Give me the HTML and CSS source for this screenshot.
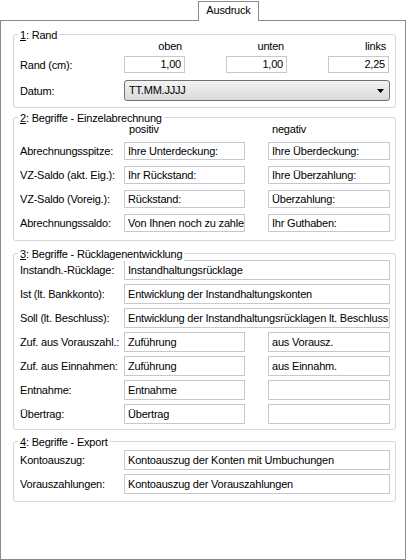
FILE: index.html
```html
<!DOCTYPE html>
<html lang="de">
<head>
<meta charset="utf-8">
<title>Ausdruck</title>
<link rel="stylesheet" href="styles.css">
</head>
<body>
<div class="tabbar"><div class="tab">Ausdruck</div></div>
<div class="panel">
  <section class="group g1">
    <div class="legend"><u>1</u>: Rand</div>
    <div class="hdr3"><span>oben</span><span>unten</span><span>links</span></div>
    <div class="row r-num"><span class="lbl">Rand (cm):</span><div class="fld num">1,00</div><div class="fld num">1,00</div><div class="fld num">2,25</div></div>
    <div class="row r-dd"><span class="lbl">Datum:</span><div class="combo"><span>TT.MM.JJJJ</span><svg class="arrow" width="7" height="4" viewBox="0 0 7 4"><polygon points="0,0 7,0 3.5,4" fill="#000"/></svg></div></div>
  </section>

  <section class="group g2">
    <div class="legend"><u>2</u>: Begriffe - Einzelabrechnung</div>
    <div class="hdr2"><span class="h-pos">positiv</span><span class="h-neg">negativ</span></div>
    <div class="rows rows2">
      <div class="row"><span class="lbl">Abrechnungsspitze:</span><div class="fld c1">Ihre Unterdeckung:</div><div class="fld c2">Ihre Überdeckung:</div></div>
      <div class="row"><span class="lbl">VZ-Saldo (akt. Eig.):</span><div class="fld c1">Ihr Rückstand:</div><div class="fld c2">Ihre Überzahlung:</div></div>
      <div class="row"><span class="lbl">VZ-Saldo (Voreig.):</span><div class="fld c1">Rückstand:</div><div class="fld c2">Überzahlung:</div></div>
      <div class="row"><span class="lbl">Abrechnungssaldo:</span><div class="fld c1">Von Ihnen noch zu zahlen:</div><div class="fld c2">Ihr Guthaben:</div></div>
    </div>
  </section>

  <section class="group g3">
    <div class="legend"><u>3</u>: Begriffe - Rücklagenentwicklung</div>
    <div class="rows rows3">
      <div class="row"><span class="lbl">Instandh.-Rücklage:</span><div class="fld wide">Instandhaltungsrücklage</div></div>
      <div class="row"><span class="lbl">Ist (lt. Bankkonto):</span><div class="fld wide">Entwicklung der Instandhaltungskonten</div></div>
      <div class="row"><span class="lbl">Soll (lt. Beschluss):</span><div class="fld wide">Entwicklung der Instandhaltungsrücklagen lt. Beschluss</div></div>
      <div class="row"><span class="lbl">Zuf. aus Vorauszahl.:</span><div class="fld c1">Zuführung</div><div class="fld c2">aus Vorausz.</div></div>
      <div class="row"><span class="lbl">Zuf. aus Einnahmen:</span><div class="fld c1">Zuführung</div><div class="fld c2">aus Einnahm.</div></div>
      <div class="row"><span class="lbl">Entnahme:</span><div class="fld c1">Entnahme</div><div class="fld c2"></div></div>
      <div class="row"><span class="lbl">Übertrag:</span><div class="fld c1">Übertrag</div><div class="fld c2"></div></div>
    </div>
  </section>

  <section class="group g4">
    <div class="legend"><u>4</u>: Begriffe - Export</div>
    <div class="rows rows3">
      <div class="row"><span class="lbl">Kontoauszug:</span><div class="fld wide">Kontoauszug der Konten mit Umbuchungen</div></div>
      <div class="row"><span class="lbl">Vorauszahlungen:</span><div class="fld wide">Kontoauszug der Vorauszahlungen</div></div>
    </div>
  </section>
</div>
</body>
</html>
```
FILE: styles.css
```css
body {
  margin: 0;
  background: #fff;
  color: #000;
  font-family: "Liberation Sans", Arial, sans-serif;
  font-size: 11px;
  line-height: 13px;
  letter-spacing: -0.2px;
}

.tabbar {
  height: 20px;
  padding-left: 198px;
  display: flex;
}

.tab {
  position: relative;
  margin-top: 1px;
  width: 61px;
  height: 20px;
  box-sizing: border-box;
  border: 1px solid #898990;
  border-bottom: 0;
  background: #fff;
  text-align: center;
  line-height: 17px;
}

.panel {
  width: 406px;
  height: 540px;
  box-sizing: border-box;
  border: 1px solid #898990;
  padding: 13px 9px 0 12px;
}

.group {
  position: relative;
  border: 1px solid #d0d7dc;
  border-radius: 3px;
  padding: 6px 5px 6px 6px;
}

.legend {
  position: absolute;
  top: -6px;
  left: 4px;
  padding: 0 2px;
  background: #fff;
  line-height: 13px;
  white-space: nowrap;
}

.g2 { margin-top: 9px; padding-bottom: 8px; }
.g3 { margin-top: 12px; padding-bottom: 5px; }
.g4 { margin-top: 11px; padding-top: 8px; padding-bottom: 7px; }

.row {
  display: flex;
  align-items: center;
}

.lbl {
  width: 104px;
  flex: none;
  white-space: nowrap;
  padding-top: 1px;
}

.fld {
  box-sizing: border-box;
  flex: none;
  border: 1px solid #c5c8cc;
  background: #fff;
  padding: 0 3px;
  overflow: hidden;
  white-space: nowrap;
}

/* group 1 */
.hdr3 {
  display: flex;
  padding-left: 104px;
  line-height: 11px;
  height: 11px;
}

.hdr3 span {
  width: 61px;
  box-sizing: border-box;
  padding-right: 3px;
  text-align: right;
}

.hdr3 span + span { margin-left: 41px; }

.r-num { margin-top: 4px; }

.num {
  width: 61px;
  height: 17px;
  line-height: 15px;
  text-align: right;
}

.num + .num { margin-left: 41px; }

.r-dd { margin-top: 7px; }

.combo {
  box-sizing: border-box;
  width: 266px;
  height: 21px;
  border: 1px solid #707070;
  border-radius: 3px;
  background: linear-gradient(#f3f3f3, #e6e6e6 50%, #d9d9d9);
  display: flex;
  align-items: center;
  justify-content: space-between;
  padding: 0 5px 0 4px;
}

.arrow { display: block; }

/* group 2 */
.hdr2 {
  display: flex;
  padding-left: 104px;
  line-height: 11px;
  height: 11px;
}

.h-pos { width: 144px; box-sizing: border-box; padding-left: 5px; }
.h-neg { padding-left: 4px; }

.rows {
  display: flex;
  flex-direction: column;
}

.rows2 { margin-top: 7px; gap: 6px; }
.rows2 .fld { height: 18px; line-height: 16px; }

.rows3 { gap: 4px; }
.rows3 .fld { height: 20px; line-height: 18px; }

.c1 { width: 121px; }
.c2 { width: 122px; margin-left: 23px; }
.wide { width: 266px; }
```
